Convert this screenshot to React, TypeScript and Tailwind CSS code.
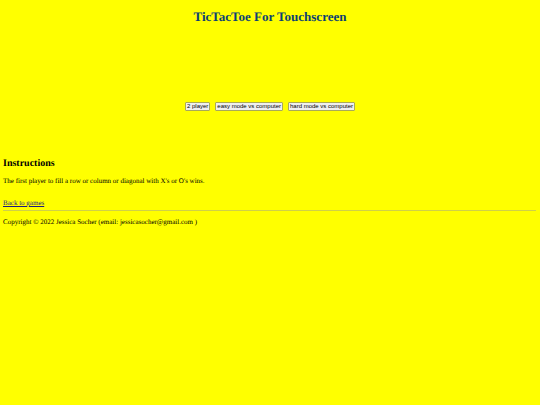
import React from "react";

const modes = ["2 player", "easy mode vs computer", "hard mode vs computer"];

export default function App() {
  return (
    <div className="min-h-screen bg-[#ffff00] px-[3px] pt-[9px] font-['Liberation_Serif',serif] text-[7px] leading-[8px] text-black [text-rendering:geometricPrecision]">
      <h1 className="text-center text-[13px] font-bold leading-[15px] text-[#0b3f73]">TicTacToe For Touchscreen</h1>
      <div className="mt-[78px] flex justify-center gap-[5px]">
        {modes.map((mode) => (
          <button
            key={mode}
            type="button"
            className="h-[9px] rounded-[1px] border border-[#a9a95a] bg-[#efefef] px-px font-['Liberation_Sans',sans-serif] text-[6px] leading-[7px] text-black"
          >
            {mode}
          </button>
        ))}
      </div>
      <h2 className="mt-[47px] text-[10px] font-bold leading-[12px]">Instructions</h2>
      <p className="mt-[7px]">The first player to fill a row or column or diagonal with X's or O's wins.</p>
      <a href="#games" className="mt-[14px] inline-block text-[#1c1c80] underline">Back to games</a>
      <hr className="mr-px mt-[3px] border-t border-[#d0d048]" />
      <footer className="mt-[7px]">Copyright © 2022 Jessica Socher (email: jessicasocher@gmail.com )</footer>
    </div>
  );
}
